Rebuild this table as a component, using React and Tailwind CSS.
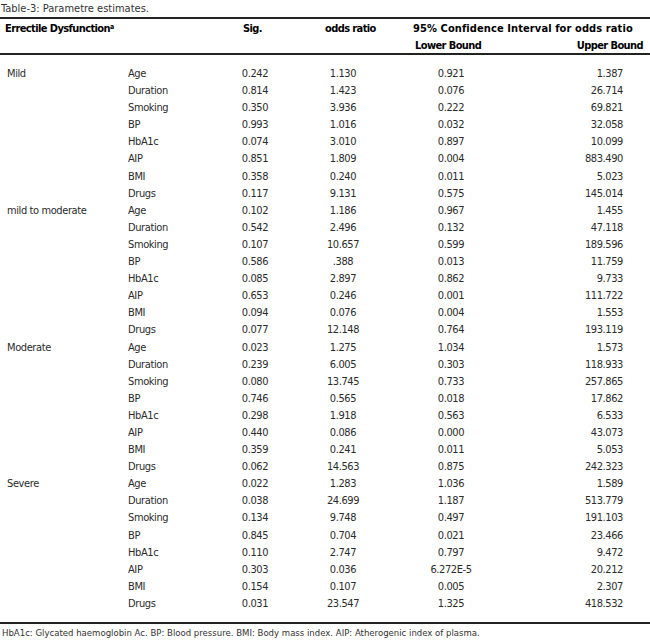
import React from "react";

const groups = [
    {
        name: "Mild",
        rows: [
            ["Age", "0.242", "1.130", "0.921", "1.387"],
            ["Duration", "0.814", "1.423", "0.076", "26.714"],
            ["Smoking", "0.350", "3.936", "0.222", "69.821"],
            ["BP", "0.993", "1.016", "0.032", "32.058"],
            ["HbA1c", "0.074", "3.010", "0.897", "10.099"],
            ["AIP", "0.851", "1.809", "0.004", "883.490"],
            ["BMI", "0.358", "0.240", "0.011", "5.023"],
            ["Drugs", "0.117", "9.131", "0.575", "145.014"],
        ],
    },
    {
        name: "mild to moderate",
        rows: [
            ["Age", "0.102", "1.186", "0.967", "1.455"],
            ["Duration", "0.542", "2.496", "0.132", "47.118"],
            ["Smoking", "0.107", "10.657", "0.599", "189.596"],
            ["BP", "0.586", ".388", "0.013", "11.759"],
            ["HbA1c", "0.085", "2.897", "0.862", "9.733"],
            ["AIP", "0.653", "0.246", "0.001", "111.722"],
            ["BMI", "0.094", "0.076", "0.004", "1.553"],
            ["Drugs", "0.077", "12.148", "0.764", "193.119"],
        ],
    },
    {
        name: "Moderate",
        rows: [
            ["Age", "0.023", "1.275", "1.034", "1.573"],
            ["Duration", "0.239", "6.005", "0.303", "118.933"],
            ["Smoking", "0.080", "13.745", "0.733", "257.865"],
            ["BP", "0.746", "0.565", "0.018", "17.862"],
            ["HbA1c", "0.298", "1.918", "0.563", "6.533"],
            ["AIP", "0.440", "0.086", "0.000", "43.073"],
            ["BMI", "0.359", "0.241", "0.011", "5.053"],
            ["Drugs", "0.062", "14.563", "0.875", "242.323"],
        ],
    },
    {
        name: "Severe",
        rows: [
            ["Age", "0.022", "1.283", "1.036", "1.589"],
            ["Duration", "0.038", "24.699", "1.187", "513.779"],
            ["Smoking", "0.134", "9.748", "0.497", "191.103"],
            ["BP", "0.845", "0.704", "0.021", "23.466"],
            ["HbA1c", "0.110", "2.747", "0.797", "9.472"],
            ["AIP", "0.303", "0.036", "6.272E-5", "20.212"],
            ["BMI", "0.154", "0.107", "0.005", "2.307"],
            ["Drugs", "0.031", "23.547", "1.325", "418.532"],
        ],
    },
];

// column widths follow the printed table: label | variable | sig | odds | lower | upper
const cols = "grid grid-cols-[120px_90px_90px_86px_130px_134px]";

const App = () => {
    return (
        <div
            className="w-[650px] h-[644px] bg-white text-[#2b2b2b] text-[11px] tracking-[-0.4px] whitespace-nowrap overflow-hidden"
            style={{ fontFamily: '"DejaVu Sans Condensed", "Liberation Sans", sans-serif' }}
        >
            <div className="h-[17px] leading-[17px] pl-[1px] text-[#333] tracking-[0px]">Table-3: Parametre estimates.</div>

            <div className="border-t-2 border-b-2 border-[#222] h-[38px] text-black font-bold tracking-[-0.6px]">
                <div className={`${cols} h-[17px] leading-[17px] mt-[1px]`}>
                    <div className="pl-[5px]">
                        Errectile Dysfunction<sup className="text-[7px]">a</sup>
                    </div>
                    <div />
                    <div className="pl-[33px]">Sig.</div>
                    <div className="pl-[25px]">odds ratio</div>
                    <div className="col-span-2 pl-[27px] tracking-[0.1px]">95% Confidence Interval for odds ratio</div>
                </div>
                <div className={`${cols} h-[17px] leading-[17px]`}>
                    <div className="col-span-4" />
                    <div className="pl-[29px]">Lower Bound</div>
                    <div className="text-right pr-[7px]">Upper Bound</div>
                </div>
            </div>

            <div className="pt-[10px] pb-[10px] border-b-2 border-[#222]">
                {groups.map((g) => (
                    <div key={g.name}>
                        {g.rows.map((r, i) => (
                            <div key={r[0]} className={`${cols} h-[17.1px] leading-[17px]`}>
                                <div className="pl-[7px]">{i === 0 ? g.name : ""}</div>
                                <div className="pl-[8px]">{r[0]}</div>
                                <div className="text-center">{r[1]}</div>
                                <div className="text-center">{r[2]}</div>
                                <div className="text-center">{r[3]}</div>
                                <div className="text-right pr-[27px]">{r[4]}</div>
                            </div>
                        ))}
                    </div>
                ))}
            </div>

            <div className="text-[9.5px] leading-[18px] pl-[2px] text-[#333] tracking-[0px]">
                HbA1c: Glycated haemoglobin Ac. BP: Blood pressure. BMI: Body mass index. AIP: Atherogenic index of plasma.
            </div>
        </div>
    );
};

export default App;
